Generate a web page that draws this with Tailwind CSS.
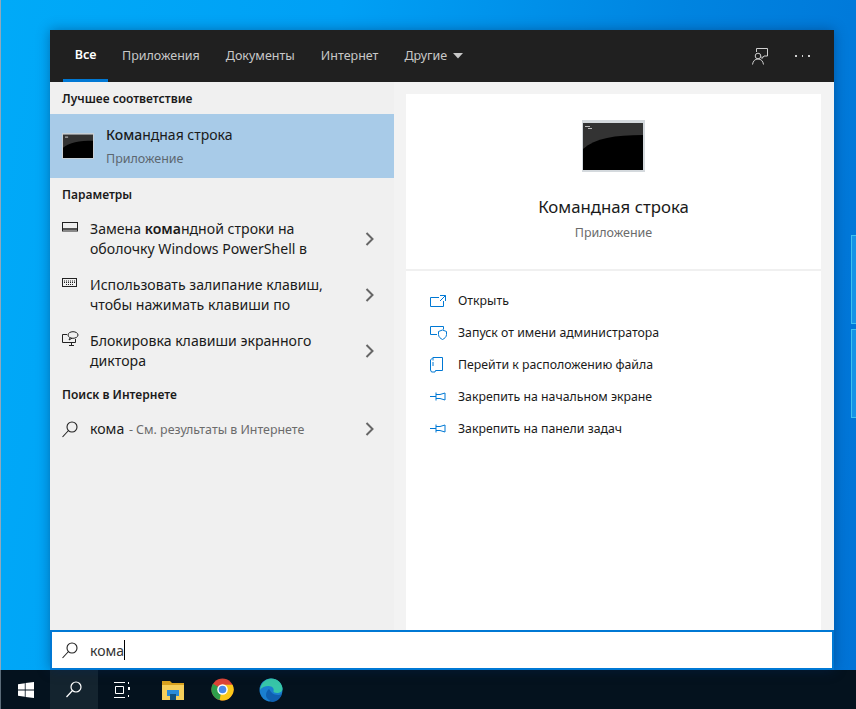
<!DOCTYPE html>
<html lang="ru">
<head>
<meta charset="UTF-8">
<title>Поиск</title>
<script src="https://cdn.jsdelivr.net/npm/@tailwindcss/browser@4"></script>
</head>
<body class="w-[856px] h-[709px] overflow-hidden flex flex-col font-['Noto_Sans',sans-serif] text-[#1a1a1a] bg-[#0078d7]">
<!-- desktop + search window -->
<div class="relative h-[670px] shrink-0 pt-[30px] pl-[50px] border-l border-l-[#8fa9bd] bg-[linear-gradient(100deg,#00aaf8_0%,#00a0f5_35%,#0084e0_70%,#0073d6_100%)]">
  <div class="absolute right-0 top-[235px] w-[5px] h-[89px] bg-[#1593e6] border border-[#3cc0f0] border-r-0"></div>
  <div class="absolute right-0 top-[329px] w-[5px] h-[89px] bg-[#1593e6] border border-[#3cc0f0] border-r-0"></div>
  <div class="relative -ml-px w-[784px] h-[640px] flex flex-col shadow-[0_0_12px_rgba(0,40,90,0.45)]">
    <!-- tabs -->
    <div class="h-[52px] shrink-0 bg-[#202020] flex items-stretch text-[12.500px] text-[#c8c8c8] pl-[13px]">
      <div class="w-[45px] flex items-center justify-center pt-[2px] border-b-[3px] border-[#0078d4] text-white font-semibold">Все</div>
      <div class="ml-[14px] flex items-center">Приложения</div>
      <div class="ml-[26px] flex items-center">Документы</div>
      <div class="ml-[26px] flex items-center">Интернет</div>
      <div class="ml-[26px] flex items-center gap-[6px]">Другие
        <svg width="10" height="6" viewBox="0 0 10 6"><path d="M0 0h10L5 5.500z" fill="#c8c8c8"/></svg>
      </div>
      <div class="ml-auto flex items-center pr-[24px] gap-[26px]">
        <svg width="17" height="17" viewBox="0 0 17 17" fill="none" stroke="#d0d0d0" stroke-width="1"><path d="M4.500 4V.5h11v7.500h-3.500l-2 2.500V8.500"/><circle cx="6" cy="8" r="2.800"/><path d="M.5 16.500c.5-3.500 2.500-5.500 5.500-5.500s5 2 5.500 5.500"/></svg>
        <div class="flex gap-[5px] w-[15px]"><span class="w-[2px] h-[2px] bg-[#d0d0d0]"></span><span class="w-[2px] h-[2px] bg-[#d0d0d0]"></span><span class="w-[2px] h-[2px] bg-[#d0d0d0]"></span></div>
      </div>
    </div>
    <!-- body -->
    <div class="flex-1 flex min-h-0 bg-[#f3f3f3]">
      <!-- results -->
      <div class="w-[344px] shrink-0 bg-[#f0f0f0]">
        <div class="h-[32px] pl-[12px] pt-[2px] flex items-center text-[12px] font-semibold">Лучшее соответствие</div>
        <div class="h-[64px] bg-[#a8cbe8] flex items-center pl-[12px]">
          <svg class="shrink-0" width="32" height="26" viewBox="0 0 63 51">
            <rect width="63" height="51" fill="#c9d0d6"/>
            <rect x="2" y="3" width="59" height="46" fill="#333"/>
            <path d="M2 29C14 18 34 15 61 15v34H2z" fill="#000"/>
            <path d="M6 7h6v2H6z" fill="#ccc"/>
          </svg>
          <div class="ml-[12px]">
            <div class="text-[14px] leading-[20px]"><span class="font-medium">Кома</span>ндная строка</div>
            <div class="text-[12.500px] leading-[18px] mt-[5px] text-[#5c6770]">Приложение</div>
          </div>
        </div>
        <div class="h-[33px] pl-[12px] flex items-center text-[12px] font-semibold">Параметры</div>
        <div class="h-[56px] flex pl-[12px] pr-[20px] items-center text-[14.100px] leading-[20px]">
          <div class="w-[28px] h-[44px] shrink-0 pt-[5px]"><svg width="16" height="10" viewBox="0 0 16 10" fill="none" stroke="#222"><rect x=".5" y=".5" width="15" height="8.500"/><path d="M.5 7h15" stroke-width="1.500"/></svg></div>
          <div class="flex-1">Замена <b class="font-semibold">кома</b>ндной строки на<br>оболочку Windows PowerShell в</div>
          <svg width="9" height="14" viewBox="0 0 9 14" fill="none" stroke="#666" stroke-width="2"><path d="M1.500 1l6 6-6 6"/></svg>
        </div>
        <div class="h-[56px] flex pl-[12px] pr-[20px] items-center text-[14.100px] leading-[20px]">
          <div class="w-[28px] h-[44px] shrink-0 pt-[5px]"><svg width="16" height="10" viewBox="0 0 16 10" fill="none" stroke="#222"><rect x=".5" y=".5" width="14" height="8"/><path d="M2 3h11M2 4.500h11M4 6.500h7" stroke-dasharray="1 1"/></svg></div>
          <div class="flex-1">Использовать залипание клавиш,<br>чтобы нажимать клавиши по</div>
          <svg width="9" height="14" viewBox="0 0 9 14" fill="none" stroke="#666" stroke-width="2"><path d="M1.500 1l6 6-6 6"/></svg>
        </div>
        <div class="h-[56px] flex pl-[12px] pr-[20px] items-center text-[14.100px] leading-[20px]">
          <div class="w-[28px] h-[44px] shrink-0 pt-[2px]"><svg width="17" height="15" viewBox="0 0 17 15" fill="none" stroke="#222"><path d="M5 3.500H.5v8h13V8M7 14.500h5M9.500 11.500v3"/><ellipse cx="11" cy="4" rx="5" ry="3.300"/><path d="M8 7l-1 2 3-1.800"/></svg></div>
          <div class="flex-1">Блокировка клавиши экранного<br>диктора</div>
          <svg width="9" height="14" viewBox="0 0 9 14" fill="none" stroke="#666" stroke-width="2"><path d="M1.500 1l6 6-6 6"/></svg>
        </div>
        <div class="h-[31px] pl-[12px] flex items-center text-[12px] font-semibold">Поиск в Интернете</div>
        <div class="h-[38px] flex pl-[12px] pr-[20px] items-center">
          <div class="w-[28px] shrink-0"><svg width="16" height="17" viewBox="0 0 16 17" fill="none" stroke="#222" stroke-width="1.100"><circle cx="10" cy="6" r="5"/><path d="M6.500 9.500L.5 16"/></svg></div>
          <div class="flex-1 text-[14.100px]">кома <span class="ml-px text-[12.400px] text-[#6b6b6b]">- См. результаты в Интернете</span></div>
          <svg width="9" height="14" viewBox="0 0 9 14" fill="none" stroke="#666" stroke-width="2"><path d="M1.500 1l6 6-6 6"/></svg>
        </div>
      </div>
      <!-- preview -->
      <div class="flex-1 pl-[12px] pr-[13px] pt-[12px]">
        <div class="h-full bg-white flex flex-col">
          <div class="h-[177px] border-b-2 border-[#f0f0f0] flex flex-col items-center">
            <svg class="mt-[26px]" width="63" height="52" viewBox="0 0 63 52">
              <rect width="63" height="52" fill="#d4d9dd"/>
              <rect x="1" y="3" width="60" height="47" fill="#333"/>
              <path d="M1 29C13 18 33 15 61 15v35H1z" fill="#000"/>
              <path d="M3 6h5v1H3zM6 8h4v1H6z" fill="#bbb"/>
            </svg>
            <div class="mt-[23px] text-[16.800px] leading-[24px]">Командная строка</div>
            <div class="mt-[5px] text-[12.500px] text-[#6b6b6b]">Приложение</div>
          </div>
          <div class="pt-[14px] pl-[24px] text-[12.300px]">
            <div class="h-[32px] flex items-center">
              <div class="w-[28px]"><svg width="16" height="12" viewBox="0 0 16 12" fill="none" stroke="#0078d4"><path d="M9 2.500H.5v9h13V6M10 .5h5.500V6M15.500.5L10 6"/></svg></div>Открыть
            </div>
            <div class="h-[32px] flex items-center">
              <div class="w-[28px]"><svg width="17" height="14" viewBox="0 0 17 14" fill="none" stroke="#0078d4"><path d="M7 8.500H.5v-8h13v3M8.500 5.500l4-1.500 4 1.500v3c0 2.500-2 4-4 5-2-1-4-2.500-4-5z"/></svg></div>Запуск от имени администратора
            </div>
            <div class="h-[32px] flex items-center">
              <div class="w-[28px]"><svg width="13" height="16" viewBox="0 0 13 16" fill="none" stroke="#0078d4"><path d="M3 .5h9.500v13H9M3 .5L.5 3v10l1 2H5l.5-1.500H9M3 .5v3M3 9V5"/></svg></div>Перейти к расположению файла
            </div>
            <div class="h-[32px] flex items-center">
              <div class="w-[28px]"><svg width="16" height="10" viewBox="0 0 16 10" fill="none" stroke="#0078d4"><path d="M0 4.500h6M6 .5v8M6 2.500h4l5-1.500v7l-5-1.500H6"/></svg></div>Закрепить на начальном экране
            </div>
            <div class="h-[32px] flex items-center">
              <div class="w-[28px]"><svg width="16" height="10" viewBox="0 0 16 10" fill="none" stroke="#0078d4"><path d="M0 4.500h6M6 .5v8M6 2.500h4l5-1.500v7l-5-1.500H6"/></svg></div>Закрепить на панели задач
            </div>
          </div>
        </div>
      </div>
    </div>
    <!-- search box -->
    <div class="h-[40px] shrink-0 bg-white border-2 border-[#0078d4] flex items-center pl-[10px] text-[14px] text-[#333]">
      <svg width="16" height="17" viewBox="0 0 16 17" fill="none" stroke="#222" stroke-width="1.100"><circle cx="10" cy="6" r="5"/><path d="M6.500 9.500L.5 16"/></svg>
      <span class="ml-[12px]">кома</span><span class="w-px h-[20px] bg-black"></span>
    </div>
  </div>
</div>
<!-- taskbar -->
<div class="h-[39px] shrink-0 bg-[#04121e] border-l border-l-[#5a6b78] flex items-stretch">
  <div class="w-[49px] flex items-center justify-center">
    <svg width="16" height="16" viewBox="0 0 16 16" fill="#fff"><path d="M0 2.200l6.800-1v6.400H0zM7.600 1.100L16 0v7.600H7.600zM0 8.400h6.800v6.400L0 13.800zM7.600 8.400H16V16l-8.400-1.100z"/></svg>
  </div>
  <div class="w-[48px] bg-[#14242f] flex items-center justify-center">
    <svg width="16" height="17" viewBox="0 0 16 17" fill="none" stroke="#fff" stroke-width="1.200"><circle cx="10" cy="6" r="5"/><path d="M6.500 9.500L.5 16"/></svg>
  </div>
  <div class="w-[48px] flex items-center justify-center">
    <svg width="16" height="16" viewBox="0 0 16 16" fill="none" stroke="#fff"><path d="M0 .5h11M0 15.500h11M1.500 4.500h8v7h-8z"/><path d="M14 5h2v3h-2z" fill="#fff" stroke="none"/><path d="M14 0h1v2h-1zM14 13h1v2h-1z" fill="#fff" stroke="none"/></svg>
  </div>
  <div class="ml-[3px] w-[48px] flex items-center justify-center">
    <svg width="22" height="20" viewBox="0 0 22 20"><path d="M0 1h8l2 2h12v3H0z" fill="#d9a21f"/><path d="M0 5h22v15H0z" fill="#f6cf5b"/><path d="M5 10h12v6H5z" fill="#2a8bd8"/><path d="M8 14h6v6H8z" fill="#14527e"/></svg>
  </div>
  <div class="ml-px w-[48px] flex items-center justify-center">
    <svg width="23" height="23" viewBox="0 0 24 24"><circle cx="12" cy="12" r="11.500" fill="#de4437"/><path d="M12 12L2 6a11.500 11.500 0 0 0 7 17z" fill="#2f9e4b"/><path d="M12 7h10.500a11.500 11.500 0 0 1-13.500 16z" fill="#fbc91a"/><circle cx="12" cy="12" r="5.500" fill="#fff"/><circle cx="12" cy="12" r="4" fill="#4a89e8"/></svg>
  </div>
  <div class="ml-px w-[48px] flex items-center justify-center">
    <svg width="24" height="24" viewBox="0 0 24 24"><circle cx="12" cy="12" r="11.500" fill="#1a7fd0"/><path d="M1 12C2 4 8 .5 12 .5c6 0 11 4 11.500 10 .2 3-2.500 4.500-5.500 4.500-2 0-4-.8-3.500-2 1-2-1-5-5-5-3.500 0-7 1.500-8.500 4z" fill="#37c6a8"/><path d="M10 22c-4-2-4-8 0-11 2 3 4 6 9 6 1 0 3-.5 4-1-1.500 5-6 8-10 8z" fill="#0f5fb0"/></svg>
  </div>
</div>
</body>
</html>
